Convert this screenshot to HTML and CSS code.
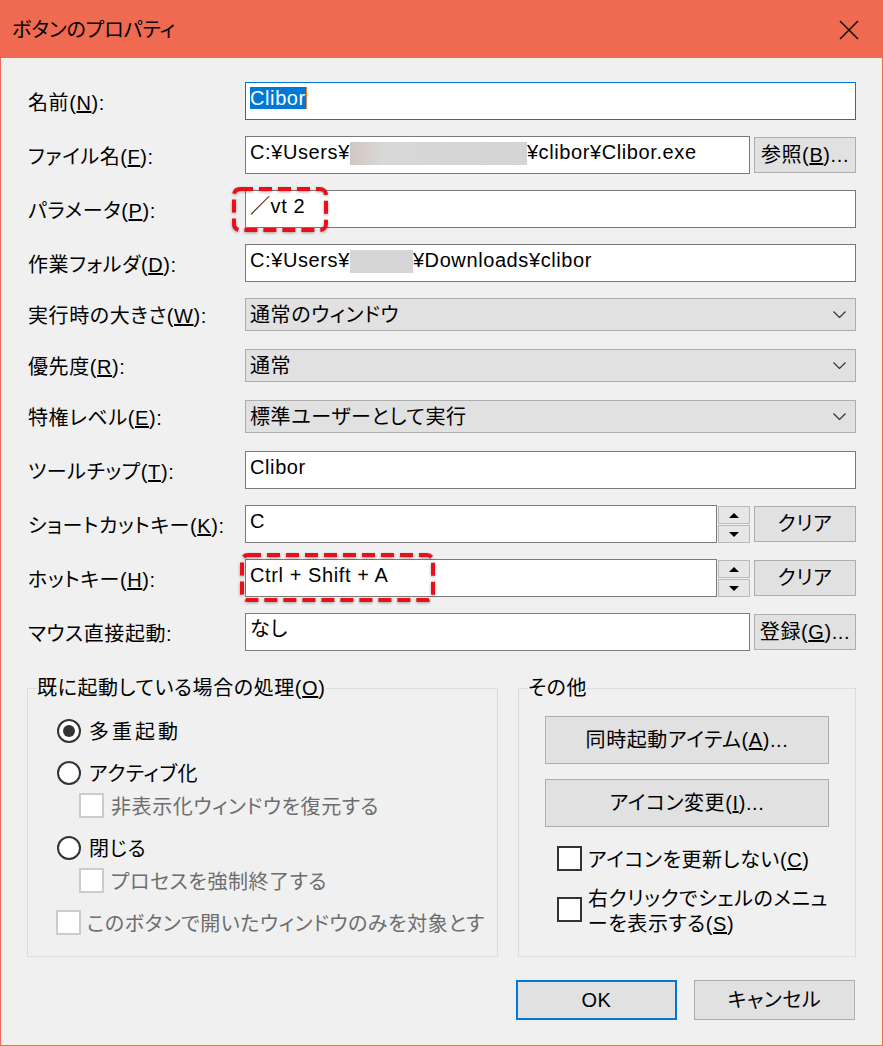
FILE: index.html
```html
<!DOCTYPE html>
<html lang="ja">
<head>
    <meta charset="UTF-8">
    <meta name="viewport" content="width=device-width, initial-scale=1.0">
    <title>ボタンのプロパティ</title>
    <link rel="stylesheet" href="styles.css">
</head>
<body>
    <div class="window">
        <header class="titlebar">
            <span class="title">ボタンのプロパティ</span>
            <svg class="close" viewBox="0 0 20 20">
                <path d="M1 1 L19 19 M19 1 L1 19"></path>
            </svg>
        </header>

        <main class="client">
            <div class="fields">
                <div class="row">
                    <label class="label">名前(<u>N</u>):</label>
                    <div class="control">
                        <div class="edit focused"><span class="sel">Clibor</span></div>
                    </div>
                </div>

                <div class="row">
                    <label class="label">ファイル名(<u>F</u>):</label>
                    <div class="control">
                        <div class="edit">C:¥Users¥<span class="masked masked-long"></span>¥clibor¥Clibor.exe</div>
                        <button class="btn">参照(<u>B</u>)...</button>
                    </div>
                </div>

                <div class="row">
                    <label class="label">パラメータ(<u>P</u>):</label>
                    <div class="control">
                        <div class="edit">／vt 2</div>
                        <svg class="mark mark-param" viewBox="0 0 96 45">
                            <rect x="2" y="2" width="92" height="41" rx="6"></rect>
                        </svg>
                    </div>
                </div>

                <div class="row">
                    <label class="label">作業フォルダ(<u>D</u>):</label>
                    <div class="control">
                        <div class="edit">C:¥Users¥<span class="masked masked-short"></span>¥Downloads¥clibor</div>
                    </div>
                </div>

                <div class="row row-combo">
                    <label class="label">実行時の大きさ(<u>W</u>):</label>
                    <div class="control">
                        <div class="combo">
                            <span>通常のウィンドウ</span>
                            <svg class="chevron" viewBox="0 0 13 7"><polyline points="0.5,0.5 6.5,6.5 12.5,0.5"></polyline></svg>
                        </div>
                    </div>
                </div>

                <div class="row row-combo">
                    <label class="label">優先度(<u>R</u>):</label>
                    <div class="control">
                        <div class="combo">
                            <span>通常</span>
                            <svg class="chevron" viewBox="0 0 13 7"><polyline points="0.5,0.5 6.5,6.5 12.5,0.5"></polyline></svg>
                        </div>
                    </div>
                </div>

                <div class="row row-combo">
                    <label class="label">特権レベル(<u>E</u>):</label>
                    <div class="control">
                        <div class="combo">
                            <span>標準ユーザーとして実行</span>
                            <svg class="chevron" viewBox="0 0 13 7"><polyline points="0.5,0.5 6.5,6.5 12.5,0.5"></polyline></svg>
                        </div>
                    </div>
                </div>

                <div class="row">
                    <label class="label">ツールチップ(<u>T</u>):</label>
                    <div class="control">
                        <div class="edit">Clibor</div>
                    </div>
                </div>

                <div class="row">
                    <label class="label">ショートカットキー(<u>K</u>):</label>
                    <div class="control">
                        <div class="spinedit">
                            <div class="edit">C</div>
                            <div class="spin">
                                <span class="spin-btn"><i class="tri tri-up"></i></span>
                                <span class="spin-btn"><i class="tri tri-down"></i></span>
                            </div>
                        </div>
                        <button class="btn">クリア</button>
                    </div>
                </div>

                <div class="row">
                    <label class="label">ホットキー(<u>H</u>):</label>
                    <div class="control">
                        <div class="spinedit">
                            <div class="edit">Ctrl + Shift + A</div>
                            <div class="spin">
                                <span class="spin-btn"><i class="tri tri-up"></i></span>
                                <span class="spin-btn"><i class="tri tri-down"></i></span>
                            </div>
                        </div>
                        <button class="btn">クリア</button>
                        <svg class="mark mark-hotkey" viewBox="0 0 195 49">
                            <rect x="2" y="2" width="191" height="45" rx="6"></rect>
                        </svg>
                    </div>
                </div>

                <div class="row">
                    <label class="label">マウス直接起動:</label>
                    <div class="control">
                        <div class="edit">なし</div>
                        <button class="btn">登録(<u>G</u>)...</button>
                    </div>
                </div>
            </div>

            <div class="groups">
                <fieldset class="group group-left">
                    <legend>既に起動している場合の処理(<u>O</u>)</legend>
                    <div class="opts">
                        <div class="opt"><span class="radio on"></span><span class="wide">多重起動</span></div>
                        <div class="opt opt-gap"><span class="radio"></span><span>アクティブ化</span></div>
                        <div class="opt opt-sub disabled"><span class="check"></span><span>非表示化ウィンドウを復元する</span></div>
                        <div class="opt opt-gap"><span class="radio"></span><span>閉じる</span></div>
                        <div class="opt opt-sub disabled"><span class="check"></span><span>プロセスを強制終了する</span></div>
                        <div class="opt opt-gap opt-last disabled"><span class="check"></span><span class="clip">このボタンで開いたウィンドウのみを対象とする</span></div>
                    </div>
                </fieldset>

                <fieldset class="group group-right">
                    <legend>その他</legend>
                    <button class="btn tool-btn">同時起動アイテム(<u>A</u>)...</button>
                    <button class="btn tool-btn tool-btn-2">アイコン変更(<u>I</u>)...</button>
                    <div class="opt opt-right"><span class="check"></span><span>アイコンを更新しない(<u>C</u>)</span></div>
                    <div class="opt opt-right opt-wrap"><span class="check"></span><span>右クリックでシェルのメニュ<br>ーを表示する(<u>S</u>)</span></div>
                </fieldset>
            </div>

            <div class="actions">
                <button class="btn dlg-btn default">OK</button>
                <button class="btn dlg-btn">キャンセル</button>
            </div>
        </main>
    </div>
</body>
</html>
```

FILE: styles.css
```css
* {
    box-sizing: border-box;
}

body {
    margin: 0;
    background-color: #fff;
    font-family: "Liberation Sans", "Noto Sans CJK JP", sans-serif;
    font-size: 20px;
    font-feature-settings: "palt";
    letter-spacing: 0.6px;
    color: #000;
}

.window {
    width: 883px;
    height: 1046px;
    display: flex;
    flex-direction: column;
}

/* title bar */
.titlebar {
    height: 58px;
    background-color: #ef6a51;
    display: flex;
    align-items: center;
    justify-content: space-between;
    padding: 2px 24px 0 12px;
}

.title {
    line-height: 28px;
    letter-spacing: 0;
}

.close {
    width: 20px;
    height: 20px;
}

.close path {
    stroke: #111;
    stroke-width: 1.6;
    fill: none;
}

/* dialog body */
.client {
    flex: 1;
    background-color: #f0f0f0;
    border: 1px solid #ef6a51;
    border-top: none;
    padding: 24px 26px 0 27px;
}

.fields {
    display: flex;
    flex-direction: column;
    gap: 16px;
}

.row {
    display: grid;
    grid-template-columns: 217px 1fr;
    align-items: center;
}

.row-combo {
    margin-bottom: 2px;
}

.label {
    line-height: 28px;
    padding-top: 3px;
    white-space: nowrap;
}

.control {
    display: flex;
    align-items: center;
    gap: 4px;
    position: relative;
}

.edit {
    flex: 1;
    min-width: 0;
    height: 38px;
    background-color: #fff;
    border: 1px solid #7a7a7a;
    padding: 3px 5px 0 4px;
    line-height: 24px;
    white-space: nowrap;
    overflow: hidden;
}

.edit.focused {
    border-color: #0078d7;
}

.sel {
    background-color: #0078d7;
    color: #fff;
    border-right: 1px solid #e8833a;
}

.masked {
    display: inline-block;
    height: 23px;
    vertical-align: -6px;
    background-color: #d6d6d6;
    filter: blur(0.6px);
}

.masked-long {
    width: 177px;
    background: linear-gradient(90deg, #d2c6c0 0%, #d8d8d8 18%, #d4d4d4 100%);
}

.masked-short {
    width: 63px;
}

.combo {
    flex: 1;
    height: 33px;
    background-color: #e1e1e1;
    border: 1px solid #adadad;
    display: flex;
    align-items: center;
    justify-content: space-between;
    padding: 0 9px 0 4px;
    line-height: 28px;
}

.chevron {
    width: 13px;
    height: 7px;
}

.chevron polyline {
    fill: none;
    stroke: #333;
    stroke-width: 1.2;
}

.btn {
    font: inherit;
    letter-spacing: inherit;
    font-feature-settings: inherit;
    color: #000;
    width: 102px;
    height: 36px;
    padding: 0;
    background-color: #e1e1e1;
    border: 1px solid #adadad;
    line-height: 28px;
    text-align: center;
}

/* edit box with up/down arrows */
.spinedit {
    flex: 1;
    display: flex;
    align-items: flex-start;
    gap: 1px;
}

.spin {
    width: 32px;
    display: flex;
    flex-direction: column;
    gap: 1px;
    padding-top: 1px;
}

.spin-btn {
    height: 18px;
    background-color: #e6e6e6;
    border: 1px solid #b9b9b9;
    display: flex;
    align-items: center;
    justify-content: center;
}

.tri {
    width: 0;
    height: 0;
    border-left: 5px solid transparent;
    border-right: 5px solid transparent;
}

.tri-up {
    border-bottom: 5px solid #000;
}

.tri-down {
    border-top: 5px solid #000;
}

/* red dashed highlight marks */
.mark {
    position: absolute;
    overflow: visible;
    filter: drop-shadow(0 1px 1.5px rgba(0, 0, 0, 0.35));
}

.mark rect {
    fill: none;
    stroke: #e8101a;
    stroke-width: 4;
    stroke-dasharray: 13 6;
}

.mark-param {
    left: -13px;
    top: -3px;
    width: 96px;
    height: 45px;
}

.mark-hotkey {
    left: -5px;
    top: -6px;
    width: 195px;
    height: 49px;
}

/* group boxes */
.groups {
    display: flex;
    gap: 20px;
    margin: 23px 0 0 -1px;
}

.group {
    margin: 0;
    padding: 0 0 0 9px;
    border: 1px solid #dcdcdc;
    height: 283px;
    min-width: 0;
}

.group legend {
    padding: 0;
    line-height: 28px;
}

.group-left {
    width: 471px;
}

.group-right {
    width: 338px;
}

.opts {
    margin: 12px 0 0 20px;
}

.opt {
    display: flex;
    align-items: center;
    height: 33px;
    gap: 8px;
    white-space: nowrap;
}

.wide {
    letter-spacing: 3px;
}

.opt-gap {
    margin-top: 9px;
}

.opt-sub {
    margin-left: 22px;
    gap: 7px;
}

.opt-last {
    margin-left: -1px;
    gap: 6px;
}

.clip {
    width: 398px;
    overflow: hidden;
}

.disabled {
    color: #6d6d6d;
}

.radio {
    flex: none;
    width: 24px;
    height: 24px;
    border: 2px solid #333;
    border-radius: 50%;
    background-color: #fff;
    display: flex;
    align-items: center;
    justify-content: center;
}

.radio.on::after {
    content: "";
    width: 12px;
    height: 12px;
    border-radius: 50%;
    background-color: #333;
}

.check {
    flex: none;
    width: 25px;
    height: 25px;
    border: 2px solid #333;
    background-color: #fff;
}

.disabled .check {
    border-color: #cccccc;
}

.tool-btn {
    display: block;
    width: 284px;
    height: 48px;
    margin: 14px 0 0 17px;
}

.tool-btn-2 {
    margin-top: 15px;
}

.opt-right {
    margin: 18px 0 0 29px;
    height: 26px;
    gap: 6px;
}

.opt-wrap {
    margin-top: 16px;
    height: auto;
    align-items: flex-start;
    line-height: 25px;
}

.opt-wrap .check {
    margin-top: 10px;
}

/* OK / Cancel */
.actions {
    display: flex;
    justify-content: flex-end;
    gap: 17px;
    margin: 23px 1px 0 0;
}

.dlg-btn {
    width: 161px;
    height: 40px;
}

.dlg-btn.default {
    border: 2px solid #0078d7;
}
```
